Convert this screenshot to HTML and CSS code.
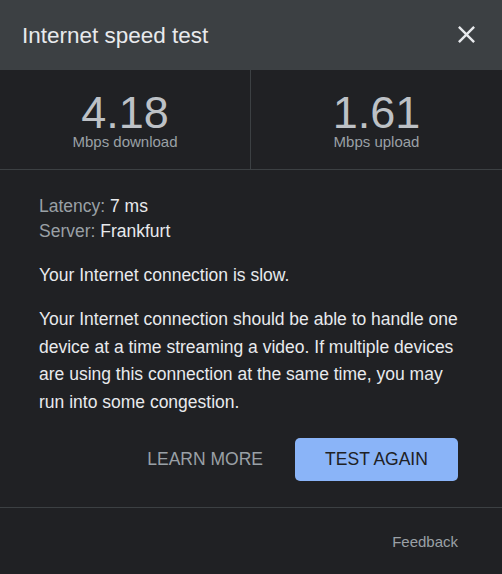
FILE: index.html
```html
<!DOCTYPE html>
<html lang="en">
<head>
<meta charset="utf-8">
<title>Internet speed test</title>
<link rel="stylesheet" href="styles.css">
</head>
<body>
<div class="dialog">
  <header class="header">
    <h1 class="title">Internet speed test</h1>
    <button class="close" aria-label="Close">
      <svg viewBox="0 0 24 24" width="29" height="29"><path fill="#e8eaed" d="M19 6.41L17.59 5 12 10.59 6.41 5 5 6.41 10.59 12 5 17.59 6.41 19 12 13.41 17.59 19 19 17.59 13.41 12z"/></svg>
    </button>
  </header>
  <section class="stats">
    <div class="stat stat-left">
      <div class="stat-value">4.18</div>
      <div class="stat-label">Mbps download</div>
    </div>
    <div class="stat">
      <div class="stat-value">1.61</div>
      <div class="stat-label">Mbps upload</div>
    </div>
  </section>
  <section class="content">
    <div class="info">
      <div><span class="muted">Latency:</span> 7 ms</div>
      <div><span class="muted">Server:</span> Frankfurt</div>
    </div>
    <p class="text slow">Your Internet connection is slow.</p>
    <p class="text">Your Internet connection should be able to handle one device at a time streaming a video. If multiple devices are using this connection at the same time, you may run into some congestion.</p>
    <div class="actions">
      <button class="learn">LEARN MORE</button>
      <button class="again">TEST AGAIN</button>
    </div>
  </section>
  <footer class="footer">
    <span class="feedback">Feedback</span>
  </footer>
</div>
</body>
</html>
```

FILE: styles.css
```css
* { box-sizing: border-box; }
html, body {
  margin: 0;
  padding: 0;
  background: #202124;
  font-family: "Liberation Sans", Arial, sans-serif;
  color: #e8eaed;
}
.dialog {
  width: 502px;
  min-height: 574px;
  background: #202124;
}
.header {
  height: 70px;
  background: #3c4043;
  display: flex;
  align-items: center;
  justify-content: space-between;
  padding: 0 21px 0 22px;
}
.title {
  margin: 0 0 0 0;
  padding-top: 2px;
  font-size: 22.5px;
  font-weight: normal;
  color: #e8eaed;
  line-height: 26px;
}
.close {
  background: none;
  border: 0;
  padding: 0;
  width: 29px;
  height: 29px;
  margin-bottom: 2px;
  display: flex;
}
.stats {
  display: grid;
  grid-template-columns: 251px 1fr;
  border-bottom: 1px solid #3c4043;
}
.stat {
  padding: 21px 0 19px;
  text-align: center;
}
.stat-left {
  border-right: 1px solid #3c4043;
}
.stat-value {
  font-size: 45px;
  line-height: 43px;
  color: #bdc1c6;
}
.stat-label {
  font-size: 15px;
  line-height: 16px;
  color: #9aa0a6;
}
.content {
  padding: 24px 40px 26px 39px;
  font-size: 17.5px;
}
.info {
  line-height: 25px;
}
.muted {
  color: #9aa0a6;
}
.text {
  margin: 0;
  line-height: 27.6px;
}
.slow {
  margin: 17px 0 17px;
  line-height: 28px;
}
.actions {
  display: flex;
  justify-content: flex-end;
  align-items: center;
  gap: 32px;
  margin-top: 22px;
  padding-right: 4px;
}
.actions button {
  font-family: "Liberation Sans", Arial, sans-serif;
  font-size: 17.5px;
  border: 0;
  cursor: pointer;
}
.learn {
  background: none;
  color: #9aa0a6;
  padding: 0;
}
.again {
  width: 163px;
  height: 43px;
  background: #8ab4f8;
  color: #202124;
  border-radius: 5px;
}
.footer {
  border-top: 1px solid #3c4043;
  padding: 25px 44px 0 0;
  text-align: right;
}
.feedback {
  font-size: 15px;
  line-height: 18px;
  color: #9aa0a6;
}
```
